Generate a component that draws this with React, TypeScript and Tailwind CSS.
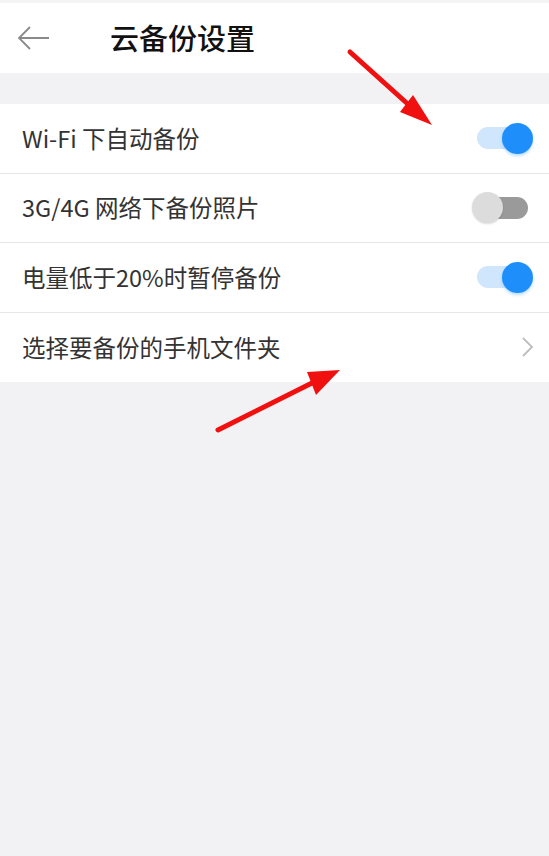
const Toggle = ({ on }: { on: boolean }) =>
  on ? (
    <div className="relative w-[56px] h-[32px] flex items-center">
      <div className="absolute left-0 w-[50px] h-[22px] rounded-full bg-[#cfe6fd]" />
      <div className="absolute right-0 w-[31px] h-[31px] rounded-full bg-[#1e8ffa] shadow-[0_2px_3px_rgba(30,143,250,0.3)]" />
    </div>
  ) : (
    <div className="relative w-[56px] h-[32px] flex items-center mr-[5px]">
      <div className="absolute right-0 w-[40px] h-[22px] rounded-full bg-[#9a9a9a]" />
      <div className="absolute left-0 w-[31px] h-[31px] rounded-full bg-[#dcdcdc] shadow-[0_1px_2px_rgba(0,0,0,0.15)]" />
    </div>
  );

const Row = ({ label, children }: { label: string; children: React.ReactNode }) => (
  <div className="flex items-center justify-between h-[69.5px] pl-[22px] pr-[16px] border-b border-[#e6e6e6] last:border-b-0">
    <span className="text-[23.5px] text-[#333]">{label}</span>
    {children}
  </div>
);

export default function App() {
  return (
    <div
      className="relative w-[549px] h-[856px] bg-[#f2f2f4] overflow-hidden"
      style={{ fontFamily: '"Noto Sans CJK SC", "Noto Sans", sans-serif' }}
    >
      <div className="h-[3px] bg-[#f4f4f4]" />
      <div className="h-[70px] bg-white flex items-center">
        <svg width="34" height="24" viewBox="0 0 34 24" className="ml-[17px]">
          <path d="M32 12H2M13 1L2 12l11 11" fill="none" stroke="#8a8a8a" strokeWidth="1.8" />
        </svg>
        <span className="ml-[59px] text-[29px] text-[#111] font-medium">云备份设置</span>
      </div>
      <div className="h-[31px]" />
      <div className="bg-white">
        <Row label="Wi-Fi 下自动备份">
          <Toggle on />
        </Row>
        <Row label="3G/4G 网络下备份照片">
          <Toggle on={false} />
        </Row>
        <Row label="电量低于20%时暂停备份">
          <Toggle on />
        </Row>
        <Row label="选择要备份的手机文件夹">
          <svg width="14" height="22" viewBox="0 0 14 22" className="-mr-[2px]">
            <path d="M2 2l9 9-9 9" fill="none" stroke="#bdbdbd" strokeWidth="1.8" />
          </svg>
        </Row>
      </div>

      <svg className="absolute inset-0 pointer-events-none" width="549" height="856">
        <line x1="350" y1="52" x2="410" y2="106" stroke="#f01010" strokeWidth="5" strokeLinecap="round" />
        <polygon points="432,125 400,112 413,95" fill="#f01010" />
        <line x1="218" y1="430" x2="316" y2="381" stroke="#f01010" strokeWidth="5" strokeLinecap="round" />
        <polygon points="340,370 307,372 316,395" fill="#f01010" />
      </svg>
    </div>
  );
}
